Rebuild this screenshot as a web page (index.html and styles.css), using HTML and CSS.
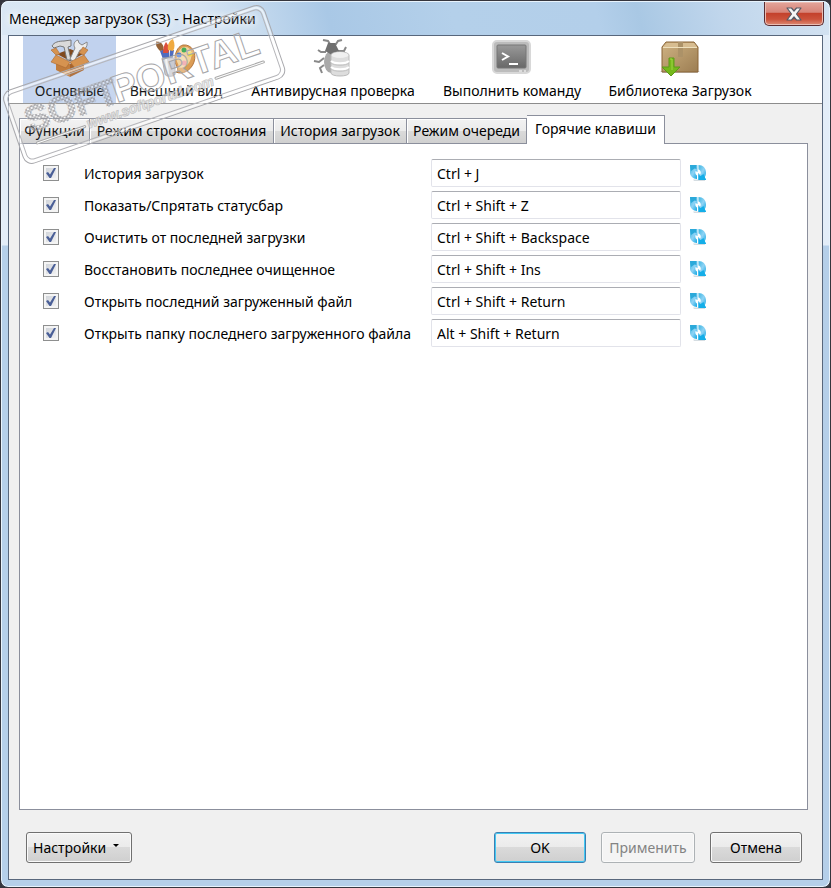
FILE: index.html
```html
<!DOCTYPE html>
<html lang="ru">
<head>
    <meta charset="UTF-8">
    <meta name="viewport" content="width=device-width, initial-scale=1.0">
    <title>Менеджер загрузок (S3) - Настройки</title>
    <link rel="stylesheet" href="styles.css">
</head>
<body>
    <!-- refresh icon, reused by every shortcut row -->
    <svg class="defs" width="0" height="0" aria-hidden="true">
        <defs>
            <linearGradient id="blue" x1="0" y1="0" x2="1" y2="1">
                <stop offset="0" stop-color="#36b4e0"/>
                <stop offset=".5" stop-color="#8fd3f5"/>
                <stop offset="1" stop-color="#0aa5e2"/>
            </linearGradient>
            <symbol id="refresh" viewBox="0 0 16 16">
                <path d="M3 14.500h12v1.500H4z" fill="#d5dde2"/>
                <path d="M0 0h7.500v7L5.500 6C5 8 5.500 9.500 7 10.500V14C3 14 0 11 0 7.500z" fill="url(#blue)"/>
                <path d="M8.500 0C13 0 16 3 16 7.500c0 2-.5 3.500-1.300 4.500L16 15H8V8l2.300 1.500C11.500 7.500 10.500 5 8.500 4.500z" fill="url(#blue)"/>
                <path d="M0 0h6.500v4L4.500 3.500 1 6z" fill="#2ba9da"/>
                <path d="M16 15H8.500V9.500l2 1.500 3-2z" fill="#14aee8"/>
            </symbol>
        </defs>
    </svg>

    <div class="window">
        <header class="titlebar">
            <h1>Менеджер загрузок (S3) - Настройки</h1>
            <button class="close" type="button" aria-label="Закрыть">
                <svg width="18" height="16" viewBox="0 0 18 16">
                    <path d="M2 2h4.500L9 5l2.500-3H16l-4.500 6L16 14h-4.500L9 11l-2.500 3H2l4.500-6z" fill="#f5f5f5" stroke="#555a66" stroke-width="1.200" stroke-linejoin="round"/>
                </svg>
            </button>
        </header>

        <form class="client">
            <nav class="toolbar">
                <button type="button" class="tool tool-main selected">
                    <svg width="40" height="40" viewBox="0 0 40 40">
                        <path d="M7 16l13-5 13 5-13 7z" fill="#80491d"/>
                        <path d="M14 3l7-1v6l-3 1 3 13h-4L14 9l-4-1-6 2-2-2c2-4 7-5 12-5z" fill="#dadada" stroke="#777"/>
                        <path d="M28 2c-4 1-5 5-3 8l-5 11 4 3 6-12c4 1 8-3 7-8l-5 3-3-2z" fill="#ececec" stroke="#888"/>
                        <path d="M6 18l14 8v13L6 32z" fill="#c17c3c"/>
                        <path d="M20 26l14-8v14l-14 7z" fill="#a8642d"/>
                        <path d="M6 17l14 7-4 6-15-6zM6 17l-5-5 5-2 4 6zM34 17l-14 7 5 6 14-6zM34 17l4-5-5-3-4 6z" fill="#d69350" stroke="#a96830" stroke-width=".6"/>
                    </svg>
                    <span>Основные</span>
                </button>
                <button type="button" class="tool tool-look">
                    <svg width="40" height="40" viewBox="0 0 40 40">
                        <path d="M27 7c9-1 14 8 11 17-3 9-12 13-18 10 5-4-3-7-1-15 1-7 4-11 8-12z" fill="#d89242" stroke="#ab6728"/>
                        <path d="M28 9c8-1 9 8 6 14-3 6-9 8-12 6 2-3-3-5-1-10 1-5 3-9 7-10z" fill="#f0ce94"/>
                        <circle cx="23" cy="17" r="2.500" fill="#3166d4"/>
                        <circle cx="28" cy="12" r="2.500" fill="#32a548"/>
                        <circle cx="34" cy="16" r="2.500" fill="#eed632"/>
                        <circle cx="28" cy="25" r="2.500" fill="#ef8a91"/>
                        <path d="M4 13l4-2 4 12-4 1zM8 12h5v12H9zM14 12h4l-2 12h-3z" fill="#3d5cb8"/>
                        <path d="M0 3c5 0 9 5 7 9l-3 1C1 10-1 7 0 3z" fill="#88501f"/>
                        <path d="M7 15c0-5 1-8 3-11 3 4 4 8 2 11z" fill="#d83b24"/>
                        <path d="M12 12c-1-5 1-9 5-11 2 5 2 9 0 12z" fill="#efa12b"/>
                        <path d="M6 20h13v16c0 3-10 3-10 0z" fill="#c5c5cb" stroke="#a2a2ad"/>
                        <path d="M10 21l2 15" stroke="#eee" stroke-width="2"/>
                    </svg>
                    <span>Внешний вид</span>
                </button>
                <button type="button" class="tool tool-virus">
                    <svg width="40" height="40" viewBox="0 0 40 40">
                        <path d="M10 2l5 1 2 3h6l2-3 4-1M13 14H8l-3-2M11 20l-5 4-5-1M11 27l-4 3 2 5M25 13h6l2-4" fill="none" stroke="#888" stroke-width="2"/>
                        <ellipse cx="18" cy="24" rx="7" ry="11" fill="#aaa"/>
                        <path d="M12 13l3-8h7l4 8-7 4z" fill="#707070"/>
                        <path d="M18 17c0-4 18-4 18 0v18c0 4-18 4-18 0z" fill="#ddd" stroke="#bbb"/>
                        <ellipse cx="27" cy="17" rx="8.500" ry="3" fill="#f0f0f0"/>
                        <path d="M18 23c3 3 15 3 18 0M18 29c3 3 15 3 18 0" fill="none" stroke="#fff" stroke-width="2"/>
                        <path d="M18 25c3 3 15 3 18 0M18 31c3 3 15 3 18 0" fill="none" stroke="#c2c2c2"/>
                    </svg>
                    <span>Антивирусная проверка</span>
                </button>
                <button type="button" class="tool tool-run">
                    <svg width="40" height="40" viewBox="0 0 40 40">
                        <defs>
                            <linearGradient id="screen" x1="0" y1="0" x2="0" y2="1">
                                <stop offset="0" stop-color="#999"/>
                                <stop offset="1" stop-color="#686868"/>
                            </linearGradient>
                        </defs>
                        <rect x="1" y="3" width="37" height="32" rx="4" fill="#bcbcbc" stroke="#d8d8d8" stroke-width="2"/>
                        <rect x="5" y="7" width="29" height="23" rx="1" fill="url(#screen)" stroke="#777"/>
                        <path d="M10 15l6 3.500-6 3.500" fill="none" stroke="#fff" stroke-width="2"/>
                        <path d="M17 26h9" stroke="#fff" stroke-width="2"/>
                        <path d="M27 33h3M32 33h2" stroke="#ddd" stroke-width="2"/>
                    </svg>
                    <span>Выполнить команду</span>
                </button>
                <button type="button" class="tool tool-library">
                    <svg width="40" height="40" viewBox="0 0 40 40">
                        <defs>
                            <linearGradient id="box" x1="0" y1="0" x2="1" y2="1">
                                <stop offset="0" stop-color="#cfb383"/>
                                <stop offset="1" stop-color="#9c7d52"/>
                            </linearGradient>
                        </defs>
                        <path d="M0 33h40l-3 2H3z" fill="#ccc"/>
                        <path d="M2 9l4-5h28l4 5v25H2z" fill="url(#box)" stroke="#8a6436"/>
                        <path d="M3 9l4-4h27l3 4z" fill="#d7bd91"/>
                        <path d="M18 4h5v15h-5z" fill="#ac9268"/>
                        <path d="M3 9.500h34" stroke="#eee0bd"/>
                        <path d="M9 20h5v9h6l-9 9-9-9h7z" fill="#75b81b" stroke="#5d9a1a"/>
                        <path d="M10 21h2v11" fill="none" stroke="#a1d545"/>
                    </svg>
                    <span>Библиотека Загрузок</span>
                </button>
            </nav>

            <div class="content">
                <div class="tabs" role="tablist">
                    <button type="button" role="tab" class="tab tab-functions">Функции</button>
                    <button type="button" role="tab" class="tab tab-status">Режим строки состояния</button>
                    <button type="button" role="tab" class="tab tab-history">История загрузок</button>
                    <button type="button" role="tab" class="tab tab-queue">Режим очереди</button>
                    <button type="button" role="tab" class="tab tab-keys active" aria-selected="true">Горячие клавиши</button>
                </div>

                <main class="panel" role="tabpanel">
                    <div class="row">
                        <input type="checkbox" id="key1" checked>
                        <label for="key1">История загрузок</label>
                        <input type="text" value="Ctrl + J" aria-label="История загрузок">
                        <button type="button" class="reset" aria-label="Сбросить"><svg width="16" height="16"><use href="#refresh"/></svg></button>
                    </div>
                    <div class="row">
                        <input type="checkbox" id="key2" checked>
                        <label for="key2">Показать/Спрятать статусбар</label>
                        <input type="text" value="Ctrl + Shift + Z" aria-label="Показать/Спрятать статусбар">
                        <button type="button" class="reset" aria-label="Сбросить"><svg width="16" height="16"><use href="#refresh"/></svg></button>
                    </div>
                    <div class="row">
                        <input type="checkbox" id="key3" checked>
                        <label for="key3">Очистить от последней загрузки</label>
                        <input type="text" value="Ctrl + Shift + Backspace" aria-label="Очистить от последней загрузки">
                        <button type="button" class="reset" aria-label="Сбросить"><svg width="16" height="16"><use href="#refresh"/></svg></button>
                    </div>
                    <div class="row">
                        <input type="checkbox" id="key4" checked>
                        <label for="key4">Восстановить последнее очищенное</label>
                        <input type="text" value="Ctrl + Shift + Ins" aria-label="Восстановить последнее очищенное">
                        <button type="button" class="reset" aria-label="Сбросить"><svg width="16" height="16"><use href="#refresh"/></svg></button>
                    </div>
                    <div class="row">
                        <input type="checkbox" id="key5" checked>
                        <label for="key5">Открыть последний загруженный файл</label>
                        <input type="text" value="Ctrl + Shift + Return" aria-label="Открыть последний загруженный файл">
                        <button type="button" class="reset" aria-label="Сбросить"><svg width="16" height="16"><use href="#refresh"/></svg></button>
                    </div>
                    <div class="row">
                        <input type="checkbox" id="key6" checked>
                        <label for="key6">Открыть папку последнего загруженного файла</label>
                        <input type="text" value="Alt + Shift + Return" aria-label="Открыть папку последнего загруженного файла">
                        <button type="button" class="reset" aria-label="Сбросить"><svg width="16" height="16"><use href="#refresh"/></svg></button>
                    </div>
                </main>

                <footer class="buttons">
                    <button type="button" class="btn btn-menu">Настройки <span class="arrow"></span></button>
                    <button type="submit" class="btn btn-ok">OK</button>
                    <button type="button" class="btn btn-apply" disabled>Применить</button>
                    <button type="button" class="btn">Отмена</button>
                </footer>
            </div>
        </form>

        <!-- stamp over the top left corner -->
        <svg class="stamp" width="300" height="170" viewBox="0 0 300 170">
            <defs>
                <pattern id="mosaic" width="4" height="4" patternUnits="userSpaceOnUse">
                    <rect x=".5" y=".5" width="3" height="3" rx="1" fill="#fff" fill-opacity=".3" stroke="#8c8c90" stroke-width=".7"/>
                </pattern>
            </defs>
            <g transform="translate(144 84) rotate(-19)">
                <rect x="-138" y="-38" width="276" height="77" rx="9" fill="#fff" fill-opacity=".1" stroke="#a9a9ad"/>
                <rect x="-136" y="-36" width="272" height="73" rx="8" fill="none" stroke="#fff" stroke-opacity=".6" stroke-width="2"/>
                <rect x="-134" y="-34" width="268" height="69" rx="6" fill="none" stroke="#b5b5b9"/>
                <text class="stamp-soft" x="-124" y="9">SOFT</text>
                <text class="stamp-portal" x="-32" y="9">PORTAL</text>
                <text class="stamp-tm" x="114" y="-20">™</text>
                <text class="stamp-url" x="0" y="24" text-anchor="middle">www.softportal.com</text>
                <path d="M-120 21h50M70 18h50" stroke="#aaa" stroke-width="3" stroke-linecap="round"/>
                <path d="M-120 21h50M70 18h50" stroke="#fff" stroke-linecap="round"/>
            </g>
        </svg>
    </div>
</body>
</html>
```
FILE: styles.css
```css
:root {
    --frame: #b5cfe9;
    --line: #8b8f9c;
    --face: #f0f0f0;
}
* {
    box-sizing: border-box;
}
body {
    margin: 0;
    background-color: #35353d;
    color: #000;
    font-family: "Noto Sans", "Open Sans", sans-serif;
    font-size: 14px;
    line-height: 20px;
}
button, input {
    font: inherit;
    color: inherit;
    margin: 0;
}
button {
    padding: 0;
    white-space: nowrap;
}
.defs {
    position: absolute;
}
.window {
    position: relative;
    display: flex;
    flex-direction: column;
    min-height: 100vh;
    padding: 0 7px 7px;
    border: 1px solid #35353d;
    border-radius: 8px;
    background: linear-gradient(#e3edf8 0, #e3edf8 244px, var(--frame) 245px);
    box-shadow: inset 0 0 0 1px #e8f3fc;
}
.titlebar {
    display: flex;
    justify-content: space-between;
    align-items: flex-start;
    height: 34px;
    margin: 0 -6px;
    padding: 0 5px 0 7px;
    border-top: 1px solid #e8f3fc;
    border-radius: 7px 7px 0 0;
    background: linear-gradient(75deg, #dae7f4 0, #d5e4f3 200px, #a9c8e6 320px, #b4d0ea 440px, #b3cfea 580px, #a9c8e4 620px, #c0d6ec 700px, #d3e2f1 100%);
}
h1 {
    margin: 7px 0 0;
    font-size: 14px;
    line-height: 20px;
    font-weight: normal;
    text-shadow: 0 0 8px #fff, 0 0 8px #fff;
}
.close {
    display: flex;
    justify-content: center;
    align-items: center;
    width: 60px;
    height: 24px;
    border: 1px solid #5a2c31;
    border-top: 0;
    border-radius: 0 0 5px 5px;
    background: linear-gradient(#e3a59b 0, #d78478 45%, #c3402b 48%, #cb523b 75%, #dd8b75 100%);
    box-shadow: inset 0 0 0 1px #eabdb3;
}
.client {
    flex: 1;
    display: flex;
    flex-direction: column;
    border: 1px solid #58677c;
    background-color: var(--face);
}
.toolbar {
    display: flex;
    height: 68px;
    padding-left: 14px;
    border-bottom: 1px solid #8c8c8c;
    background-color: #fff;
}
.tool {
    display: flex;
    flex-direction: column;
    align-items: center;
    padding-top: 2px;
    border: 0;
    background: none;
}
.tool svg {
    margin-bottom: 3px;
}
.tool.selected {
    background-color: #c1d2ee;
}
.tool-main {
    width: 93px;
}
.tool-look {
    width: 120px;
}
.tool-virus {
    width: 194px;
}
.tool-run {
    width: 164px;
}
.tool-library {
    width: 172px;
}
.content {
    flex: 1;
    display: flex;
    flex-direction: column;
    padding: 11px 14px 16px 10px;
}
.tabs {
    display: flex;
    align-items: flex-end;
}
.tab {
    height: 25px;
    border: 1px solid var(--line);
    border-bottom: 0;
    border-left-width: 0;
    background: linear-gradient(#f2f2f2 0, #ebebeb 50%, #dadada 52%, #d0d0d0 100%);
    box-shadow: inset 1px 1px #fff;
}
.tab-functions {
    width: 71px;
    border-left-width: 1px;
}
.tab-status {
    width: 184px;
}
.tab-history {
    width: 133px;
}
.tab-queue {
    width: 120px;
}
.tab-keys {
    width: 138px;
}
.tab.active {
    height: 29px;
    margin-bottom: -1px;
    padding-bottom: 2px;
    background: #fff;
    z-index: 1;
}
.panel {
    flex: 1;
    display: flex;
    flex-direction: column;
    gap: 4px;
    padding: 15px 23px;
    border: 1px solid var(--line);
    background-color: #fff;
}
.row {
    display: grid;
    grid-template-columns: 41px 347px 250px 16px;
    align-items: center;
}
.row label {
    padding-top: 2px;
}
.row .reset {
    margin-left: 9px;
}
input[type="checkbox"] {
    appearance: none;
    width: 16px;
    height: 16px;
    border: 1px solid #8e8f8f;
    background: linear-gradient(135deg, #cbcfd5, #f6f6f6);
    box-shadow: inset 0 0 0 2px #f4f4f4;
}
input[type="checkbox"]:checked::before {
    content: "";
    display: block;
    width: 10px;
    height: 10px;
    margin: 2px;
    background-color: #4a5f97;
    clip-path: polygon(0 50%, 20% 40%, 40% 65%, 80% 0, 100% 0, 50% 100%, 35% 100%);
}
input[type="text"] {
    width: 100%;
    height: 28px;
    padding: 0 5px;
    border: 1px solid #e2e3ea;
    border-top-color: #abadb3;
    border-radius: 2px;
    background-color: #fff;
}
.reset {
    width: 16px;
    height: 16px;
    border: 0;
    background: none;
}
.reset svg {
    display: block;
}
.buttons {
    display: flex;
    gap: 15px;
    padding: 22px 6px 0 7px;
}
.btn {
    width: 92px;
    height: 31px;
    border: 1px solid #707070;
    border-radius: 3px;
    background: linear-gradient(#f2f2f2 0, #ebebeb 48%, #dadada 50%, #cfcfcf 100%);
    box-shadow: inset 0 0 0 1px #fafafa;
}
.btn-menu {
    display: flex;
    align-items: center;
    gap: 7px;
    width: 106px;
    margin-right: auto;
    padding-left: 6px;
}
.btn-ok {
    border-color: #3c7fb1;
    box-shadow: inset 0 0 0 1px #42c9f4;
}
.btn-apply {
    width: 94px;
    border-color: #adb2b5;
    background: #f4f4f4;
    color: #838383;
}
.arrow {
    margin-bottom: 4px;
    border: 3px solid transparent;
    border-top-color: #000;
    border-bottom: 0;
}
.stamp {
    position: absolute;
    top: -1px;
    left: -1px;
    pointer-events: none;
}
.stamp text {
    font-family: "Liberation Sans", Arial, sans-serif;
}
.stamp-soft {
    font-size: 36px;
    font-weight: bold;
    fill: url(#mosaic);
    stroke: url(#mosaic);
    stroke-width: 2px;
}
.stamp-portal {
    font-size: 38px;
    font-weight: bold;
    fill: #fff;
    fill-opacity: 0.3;
    stroke: #a5a5a8;
    stroke-width: 1px;
}
.stamp .stamp-tm {
    font-size: 12px;
    fill: #a5a5a8;
}
.stamp .stamp-url {
    font-size: 14px;
    font-weight: bold;
    font-style: italic;
    fill: #e4e4e4;
    fill-opacity: 0.6;
    stroke: #999;
    stroke-opacity: 0.6;
    stroke-width: 1px;
    paint-order: stroke;
}
```
